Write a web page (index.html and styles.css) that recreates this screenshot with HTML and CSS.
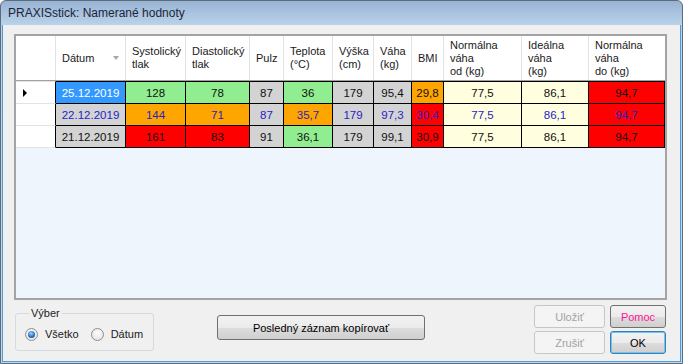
FILE: index.html
```html
<!DOCTYPE html>
<html lang="sk">
<head>
<meta charset="utf-8">
<title>PRAXISstick: Namerané hodnoty</title>
<link rel="stylesheet" href="styles.css">
</head>
<body>
<div class="window">
  <div class="titlebar"><span class="title">PRAXISstick: Namerané hodnoty</span></div>
  <div class="client">
    <div class="grid">
      <div class="hrow">
        <div class="hc"></div>
        <div class="hc sort"><span>Dátum</span><span class="sortarrow"></span></div>
        <div class="hc">Systolický<br>tlak</div>
        <div class="hc">Diastolický<br>tlak</div>
        <div class="hc">Pulz</div>
        <div class="hc">Teplota<br>(°C)</div>
        <div class="hc">Výška<br>(cm)</div>
        <div class="hc">Váha<br>(kg)</div>
        <div class="hc">BMI</div>
        <div class="hc">Normálna<br>váha<br>od (kg)</div>
        <div class="hc">Ideálna<br>váha<br>(kg)</div>
        <div class="hc">Normálna<br>váha<br>do (kg)</div>
      </div>
      <div class="drow first">
        <div class="rh"><span class="current"></span></div>
        <div class="c sel">25.12.2019</div>
        <div class="c g">128</div>
        <div class="c g">78</div>
        <div class="c gr">87</div>
        <div class="c g">36</div>
        <div class="c gr">179</div>
        <div class="c gr">95,4</div>
        <div class="c o">29,8</div>
        <div class="c y">77,5</div>
        <div class="c y">86,1</div>
        <div class="c r">94,7</div>
      </div>
      <div class="drow blue">
        <div class="rh"></div>
        <div class="c gr">22.12.2019</div>
        <div class="c o">144</div>
        <div class="c o">71</div>
        <div class="c gr">87</div>
        <div class="c o">35,7</div>
        <div class="c gr">179</div>
        <div class="c gr">97,3</div>
        <div class="c r">30,4</div>
        <div class="c y">77,5</div>
        <div class="c y">86,1</div>
        <div class="c r">94,7</div>
      </div>
      <div class="drow">
        <div class="rh"></div>
        <div class="c gr">21.12.2019</div>
        <div class="c r">161</div>
        <div class="c r">83</div>
        <div class="c gr">91</div>
        <div class="c g">36,1</div>
        <div class="c gr">179</div>
        <div class="c gr">99,1</div>
        <div class="c r">30,9</div>
        <div class="c y">77,5</div>
        <div class="c y">86,1</div>
        <div class="c r">94,7</div>
      </div>
    </div>
    <div class="bottom">
      <fieldset class="group">
        <legend>Výber</legend>
        <div class="radios">
          <span class="opt"><span class="radio on"></span>Všetko</span>
          <span class="opt"><span class="radio"></span>Dátum</span>
        </div>
      </fieldset>
      <button class="btn copy" type="button">Posledný záznam kopírovať</button>
      <div class="actions">
        <button class="btn disabled" type="button">Uložiť</button>
        <button class="btn help" type="button">Pomoc</button>
        <button class="btn disabled" type="button">Zrušiť</button>
        <button class="btn ok" type="button">OK</button>
      </div>
    </div>
  </div>
</div>
</body>
</html>
```
FILE: styles.css
```css
* { box-sizing: border-box; }
html, body { margin: 0; padding: 0; background: #ffffff; }
body { font-family: "Liberation Sans", Arial, sans-serif; font-size: 11px; color: #000; }

.window {
  width: 683px;
  height: 364px;
  display: flex;
  flex-direction: column;
  border: 1px solid #5c6b7a;
  border-radius: 6px 6px 0 0;
  background: linear-gradient(#98b3d3, #bad2ea 24px, #c4d9ee);
  padding: 0 1px 1px;
  overflow: hidden;
}
.titlebar {
  height: 24px;
  flex: none;
  display: flex;
  align-items: center;
  padding-left: 6px;
}
.title { font-size: 12px; color: #1b2538; }

.client {
  flex: 1;
  background: #f0f0f0;
  border: 1px solid #4e9bd6;
  border-top: none;
  padding: 9px 0 0 11px;
  display: flex;
  flex-direction: column;
}

.grid {
  flex: none;
  width: 653px;
  height: 266px;
  border: 2px solid #a3a3a3;
  background: #eef5fd;
}
.hrow, .drow {
  display: grid;
  grid-template-columns: 40px 70px 60px 64px 34px 49px 41px 38px 32px 78px 67px 76px;
}
.hrow { height: 45px; border-bottom: 1px solid #a0a0a0; }
.hc {
  background: #ffffff;
  border-right: 1px solid #e3e3e3;
  display: flex;
  align-items: center;
  padding-left: 6px;
  line-height: 13px;
  color: #1a1a1a;
}
.hc.sort { justify-content: space-between; padding-right: 6px; }
.sortarrow {
  width: 0; height: 0;
  border-left: 3.5px solid transparent;
  border-right: 3.5px solid transparent;
  border-top: 4px solid #a8a8a8;
}
.hc:last-child { border-right: none; }

.drow { height: 22px; }
.drow.first { height: 23px; }
.rh {
  background: #ffffff;
  border-right: 1px solid #000;
  border-bottom: 1px solid #e3e3e3;
  display: flex;
  align-items: center;
  padding-left: 7px;
}
.current {
  width: 0; height: 0;
  border-top: 4px solid transparent;
  border-bottom: 4px solid transparent;
  border-left: 4px solid #000;
}
.c {
  border-right: 1px solid #000;
  border-bottom: 1px solid #000;
  display: flex;
  align-items: center;
  justify-content: center;
  color: #111;
  font-size: 11.5px;
}
.drow.first .c { border-top: 1px solid #000; }
.drow.first .rh { border-top: 1px solid #e3e3e3; }
.drow.blue .c { color: #2424c8; }
.c.sel { background: #3399ff; color: #ffffff; }
.c.g { background: #90ee90; }
.c.o { background: #ffa500; }
.c.r { background: #ff0000; }
.c.gr { background: #d3d3d3; }
.c.y { background: #ffffe0; }

.bottom {
  flex: 1;
  display: flex;
  align-items: flex-start;
}
.group {
  margin: 7px 0 0 1px;
  width: 139px;
  height: 44px;
  border: 1px solid #d5dadf;
  border-radius: 3px;
  padding: 8px 0 0 9px;
}
.group legend {
  padding: 0 2px;
  margin-left: 4px;
  line-height: 13px;
  color: #1a1a1a;
}
.radios { display: flex; gap: 12px; }
.opt { display: inline-flex; align-items: center; gap: 7px; line-height: 13px; color: #1a1a1a; }
.radio {
  width: 13px; height: 13px;
  border-radius: 50%;
  border: 1px solid #8e8f8f;
  background: radial-gradient(circle at 50% 40%, #ffffff, #dcdcdc);
  display: flex;
  align-items: center;
  justify-content: center;
}
.radio.on::after {
  content: "";
  width: 7px; height: 7px;
  border-radius: 50%;
  background: radial-gradient(circle at 45% 35%, #9fd3ff, #1b6ec2 60%, #0a3d80);
}

.btn {
  font-family: "Liberation Sans", Arial, sans-serif;
  font-size: 11px;
  color: #000;
  border: 1px solid #707070;
  border-radius: 3px;
  background: linear-gradient(#f2f2f2 0%, #ebebeb 50%, #dddddd 51%, #cfcfcf 100%);
  padding: 0;
}
.copy { margin: 15px 0 0 63px; width: 208px; height: 25px; }
.actions {
  margin: 5px 0 0 109px;
  display: grid;
  grid-template-columns: 71px 56px;
  grid-template-rows: 23px 23px;
  gap: 3px 5px;
}
.btn.disabled { border-color: #c6c6c6; background: #f4f4f4; color: #a3a3a3; }
.btn.help { color: #ff1493; }
.btn.ok { border-color: #3c7fb1; box-shadow: inset 0 0 0 1px #6cc6f2; }
```
